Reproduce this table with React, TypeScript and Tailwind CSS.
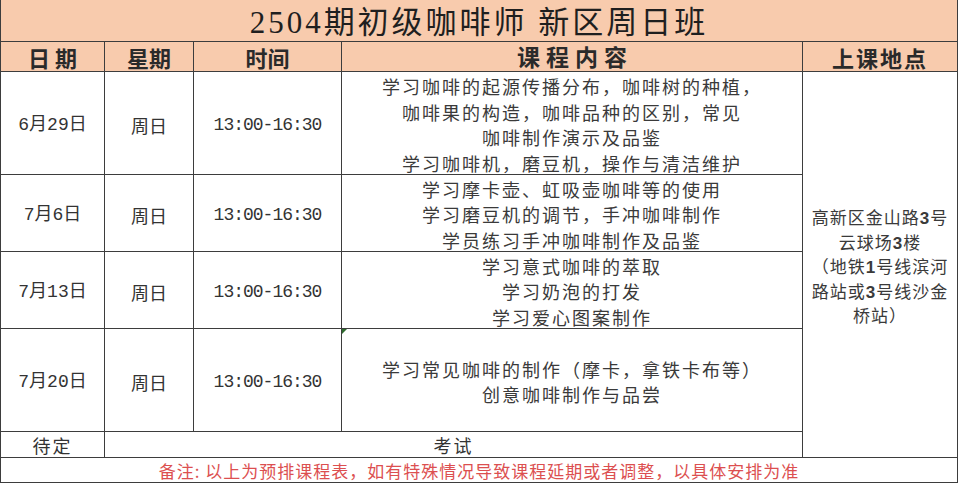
import React from "react";

const cjk = "font-['Noto_Sans_CJK_SC',sans-serif]";
const mono = "font-['Liberation_Mono','Noto_Sans_CJK_SC',monospace]";

const lessons = [
  {
    date: "6月29日",
    lines: [
      "学习咖啡的起源传播分布，咖啡树的种植，",
      "咖啡果的构造，咖啡品种的区别，常见",
      "咖啡制作演示及品鉴",
      "学习咖啡机，磨豆机，操作与清洁维护",
    ],
  },
  {
    date: "7月6日",
    lines: [
      "学习摩卡壶、虹吸壶咖啡等的使用",
      "学习磨豆机的调节，手冲咖啡制作",
      "学员练习手冲咖啡制作及品鉴",
    ],
  },
  {
    date: "7月13日",
    lines: ["学习意式咖啡的萃取", "学习奶泡的打发", "学习爱心图案制作"],
  },
  {
    date: "7月20日",
    lines: ["学习常见咖啡的制作（摩卡，拿铁卡布等）", "创意咖啡制作与品尝"],
    flag: true,
  },
];

const Num = ({ children }: { children: React.ReactNode }) => (
  <span className="font-['Liberation_Sans',sans-serif] font-bold">{children}</span>
);

export default function App() {
  return (
    <div className="w-[960px] h-[484px] bg-white overflow-hidden">
      <div className="grid w-[958px] grid-cols-[103px_88px_147px_460px_154px] grid-rows-[41px_29px_102px_76px_76px_102px_25px_24px] gap-px bg-[#3d3d3d] px-px pb-px pt-0 text-[#333]">
        {/* title */}
        <div className="col-span-5 bg-[#f8cbad] flex items-center justify-center pt-1">
          <span className="font-['Liberation_Serif','Noto_Sans_CJK_SC',serif] text-[31px] tracking-[3px] text-[#1f1f1f] leading-none">
            2504期初级咖啡师 新区周日班
          </span>
        </div>

        {/* header */}
        {["日 期", "星期", "时间"].map((h) => (
          <div
            key={h}
            className={`bg-[#f8cbad] flex items-center justify-center ${cjk} text-[22px] font-bold text-[#2a2a2a] leading-none whitespace-pre`}
          >
            {h}
          </div>
        ))}
        <div className={`bg-[#f8cbad] flex items-center justify-center ${cjk} text-[23px] font-bold text-[#2a2a2a] leading-none tracking-[6px] pl-[6px]`}>
          课程内容
        </div>
        <div className={`bg-[#f8cbad] flex items-center justify-center ${cjk} text-[22px] font-bold text-[#2a2a2a] leading-none tracking-[2px]`}>
          上课地点
        </div>

        {lessons.map((l, i) => (
          <React.Fragment key={l.date}>
            <div className={`bg-white flex items-center justify-center pt-1 ${mono} text-[18px]`}>
              {l.date}
            </div>
            <div className={`bg-white flex items-center justify-center pt-1 ${cjk} text-[18px]`}>
              周日
            </div>
            <div className={`bg-white flex items-center justify-center pt-1 ${mono} text-[18px] tracking-[-1px]`}>
              13:00-16:30
            </div>
            <div className={`relative bg-white flex flex-col items-center justify-center pt-1 ${cjk} text-[18px] tracking-[2px] leading-[25.5px] text-[#3a3a3a]`}>
              {l.flag && (
                <span className="absolute left-0 top-0 h-0 w-0 border-t-[5px] border-r-[5px] border-t-[#2e6b2e] border-r-transparent" />
              )}
              {l.lines.map((t) => (
                <div key={t}>{t}</div>
              ))}
            </div>
            {i === 0 && (
              <div className={`row-span-5 bg-white flex flex-col items-center justify-center pt-1 ${cjk} text-[17px] tracking-[1px] leading-[22.5px] text-[#3a3a3a]`}>
                <div>
                  高新区金山路<Num>3</Num>号
                </div>
                <div>
                  云球场<Num>3</Num>楼
                </div>
                <div>
                  （地铁<Num>1</Num>号线滨河
                </div>
                <div>
                  路站或<Num>3</Num>号线沙金
                </div>
                <div>桥站）</div>
              </div>
            )}
          </React.Fragment>
        ))}

        <div className={`bg-white flex items-center justify-center ${cjk} text-[18px] tracking-[2px] leading-none`}>
          待定
        </div>
        <div className={`col-span-3 bg-white flex items-center justify-center ${cjk} text-[18px] tracking-[2px] leading-none`}>
          考试
        </div>

        <div className={`col-span-5 bg-white flex items-center justify-center ${cjk} text-[17px] tracking-[1px] leading-none text-[#dc4f50]`}>
          备注: 以上为预排课程表，如有特殊情况导致课程延期或者调整，以具体安排为准
        </div>
      </div>
    </div>
  );
}
